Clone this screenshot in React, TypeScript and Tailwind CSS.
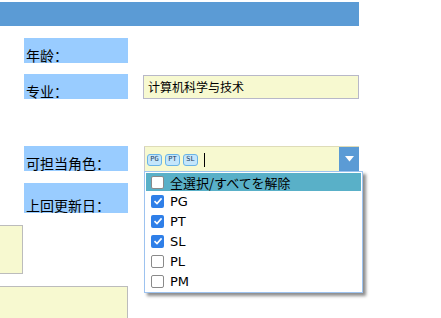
const cjk = { fontFamily: '"Noto Sans CJK SC", "Noto Sans", sans-serif' };
const jp = { fontFamily: '"Noto Sans CJK JP", "Noto Sans", sans-serif' };

function Label({ text, tall }: { text: string; tall?: boolean }) {
  return (
    <div
      className={`flex w-[104px] items-end bg-[#99ccff] pb-[1px] pl-[2px] text-[14px] leading-none text-black ${tall ? 'h-[30px]' : 'h-[25px]'}`}
      style={cjk}
    >
      {text}
    </div>
  );
}

function Box({ checked }: { checked?: boolean }) {
  if (checked)
    return (
      <span className="flex h-[13px] w-[13px] items-center justify-center rounded-[2px] bg-[#2f7fe8]">
        <svg width="10" height="10" viewBox="0 0 10 10">
          <path d="M1.5 5.2 L4 7.6 L8.6 2.4" fill="none" stroke="white" strokeWidth="1.6" />
        </svg>
      </span>
    );
  return <span className="h-[13px] w-[13px] rounded-[2px] border border-[#8a8a8a] bg-white" />;
}

function Tag({ t }: { t: string }) {
  return (
    <span
      className="flex h-[12px] w-[15px] items-center justify-center rounded-[3px] border border-[#6ab4e6] bg-[#c4e6fb] text-[7px] leading-none text-[#1a3a5a]"
      style={{ fontFamily: '"DejaVu Sans Mono", monospace' }}
    >
      {t}
    </span>
  );
}

export default function App() {
  const items = [
    ['PG', true],
    ['PT', true],
    ['SL', true],
    ['PL', false],
    ['PM', false],
  ] as const;
  return (
    <div className="h-[318px] w-[441px] overflow-hidden bg-white">
      <div className="mt-[2px] h-[24px] w-[359px] bg-[#5b9bd5]" />

      <div className="mt-[12px] flex pl-[24px]">
        <Label text="年龄：" />
      </div>

      <div className="mt-[11px] flex items-end pl-[24px]">
        <Label text="专业：" />
        <div
          className="ml-[15px] flex h-[24px] w-[216px] items-center border border-[#b8b8c8] bg-[#f7f9d0] pl-[4px] text-[12px] text-black"
          style={cjk}
        >
          计算机科学与技术
        </div>
      </div>

      <div className="mt-[47px] flex pl-[24px]">
        <Label text="可担当角色：" />
        <div className="relative ml-[16px] flex h-[25px] w-[215px] border-t border-[#dedcb8] bg-[#f7f9d0]">
          <div className="flex flex-1 items-center gap-[3px] border-l border-[#c8c8d0] pl-[2px] pt-[1px]">
            <Tag t="PG" />
            <Tag t="PT" />
            <Tag t="SL" />
            <span className="ml-[3px] h-[14px] w-[1px] bg-black" />
          </div>
          <div className="flex w-[20px] items-center justify-center bg-[#5b9bd5]">
            <svg width="9" height="6" viewBox="0 0 9 6">
              <path d="M0 0 H9 L4.5 5.5 Z" fill="white" />
            </svg>
          </div>

          <div className="absolute left-0 top-[24px] z-10 w-[219px] border border-[#9dc3f0] bg-white shadow-[3px_3px_3px_rgba(0,0,0,0.45)]">
            <div className="mx-[1px] mt-[1px] flex h-[18px] items-center gap-[6px] bg-[#59b0c8] pl-[5px] text-[13px] leading-none text-black" style={jp}>
              <Box />
              全選択/すべてを解除
            </div>
            {items.map(([t, c]) => (
              <div
                key={t}
                className="flex h-[20px] items-center gap-[6px] pl-[6px] text-[13px] leading-none text-black"
                style={{ fontFamily: '"DejaVu Sans", sans-serif' }}
              >
                <Box checked={c} />
                {t}
              </div>
            ))}
            <div className="h-[1px]" />
          </div>
        </div>
      </div>

      <div className="mt-[12px] flex pl-[24px]">
        <Label text="上回更新日：" tall />
      </div>

      <div className="mt-[12px] h-[49px] w-[23px] border border-[#bcbcbc] border-l-0 bg-[#f7f9d0]" />

      <div className="mt-[12px] h-[40px] w-[128px] border-r border-t border-[#bcbcbc] bg-[#f7f9d0]" />
    </div>
  );
}
